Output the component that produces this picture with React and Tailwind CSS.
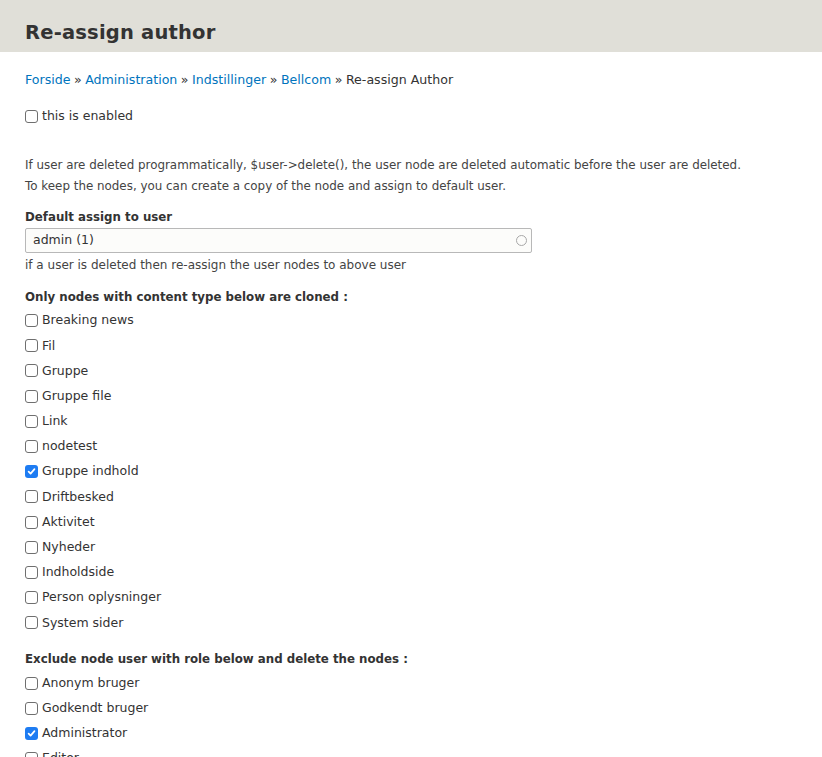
import React from "react";

function Box({ checked }) {
  return checked ? (
    <span className="inline-flex items-center justify-center w-[13px] h-[13px] rounded-[3px] bg-[#1e7cf2] shrink-0">
      <svg width="9" height="9" viewBox="0 0 10 10">
        <path d="M1.8 5.2 L4 7.4 L8.3 2.4" stroke="white" strokeWidth="1.9" fill="none" strokeLinecap="round" strokeLinejoin="round" />
      </svg>
    </span>
  ) : (
    <span className="inline-block w-[13px] h-[13px] rounded-[3px] border border-[#6f6f6f] bg-white shrink-0" />
  );
}

function Item({ label, checked }) {
  return (
    <div className="flex items-center h-[25.2px] gap-[4px]">
      <Box checked={checked} />
      <span className="leading-none text-[12.5px]">{label}</span>
    </div>
  );
}

const types = [
  ["Breaking news"],
  ["Fil"],
  ["Gruppe"],
  ["Gruppe file"],
  ["Link"],
  ["nodetest"],
  ["Gruppe indhold", true],
  ["Driftbesked"],
  ["Aktivitet"],
  ["Nyheder"],
  ["Indholdside"],
  ["Person oplysninger"],
  ["System sider"],
];

const roles = [
  ["Anonym bruger"],
  ["Godkendt bruger"],
  ["Administrator", true],
  ["Editor"],
];

export default function App() {
  return (
    <div
      className="min-h-[757px] bg-white text-[#333] text-[12px]"
      style={{ fontFamily: '"DejaVu Sans", sans-serif' }}
    >
      <div className="h-[52px] bg-[#e0dfd8] flex items-center px-[25px]">
        <h1 className="text-[19.5px] font-bold text-[#333] tracking-[0.2px] pt-[13px]">Re-assign author</h1>
      </div>
      <div className="px-[25px]">
        <div className="h-[54px] flex items-center pt-[2px] text-[12.6px]">
          <a className="text-[#0074bd]">Forside</a>
          <span className="mx-[3.5px]">»</span>
          <a className="text-[#0074bd]">Administration</a>
          <span className="mx-[3.5px]">»</span>
          <a className="text-[#0074bd]">Indstillinger</a>
          <span className="mx-[3.5px]">»</span>
          <a className="text-[#0074bd]">Bellcom</a>
          <span className="mx-[3.5px]">»</span>
          <span>Re-assign Author</span>
        </div>
        <div className="h-[18px] flex items-center gap-[4px] mt-[1px]">
          <Box />
          <span className="text-[12.5px]">this is enabled</span>
        </div>
        <div className="mt-[30px] leading-[21px] text-[#444] text-[11.9px]">
          <p>If user are deleted programmatically, $user-&gt;delete(), the user node are deleted automatic before the user are deleted.</p>
          <p>To keep the nodes, you can create a copy of the node and assign to default user.</p>
        </div>
        <div className="mt-[10px] font-bold leading-[20px] text-[11.8px]">Default assign to user</div>
        <div className="mt-[1px] w-[507px] h-[25px] border border-[#b8b8b8] bg-[#fcfcfa] rounded-[2px] flex items-center justify-between pl-[7px] pr-[4px] text-[#333] text-[12.5px]">
          <span>admin (1)</span>
          <span className="w-[11px] h-[11px] rounded-full border-[1.5px] border-[#a8a8a8]" />
        </div>
        <div className="mt-[2px] leading-[20px] text-[#444] text-[12px]">if a user is deleted then re-assign the user nodes to above user</div>
        <div className="mt-[12px] font-bold leading-[20px] text-[11.8px]">Only nodes with content type below are cloned :</div>
        <div className="mt-[1px]">
          {types.map(([l, c]) => (
            <Item key={l} label={l} checked={c} />
          ))}
        </div>
        <div className="mt-[14px] font-bold leading-[20px] text-[11.8px]">Exclude node user with role below and delete the nodes :</div>
        <div className="mt-[1px]">
          {roles.map(([l, c]) => (
            <Item key={l} label={l} checked={c} />
          ))}
        </div>
      </div>
    </div>
  );
}
